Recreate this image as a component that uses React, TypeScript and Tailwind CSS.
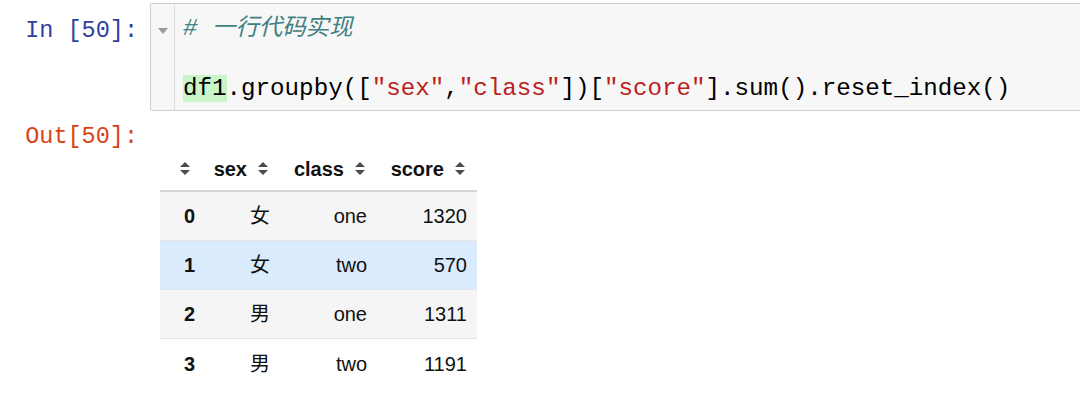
import React from 'react';

const mono = "font-['Liberation_Mono','Noto_Sans_CJK_SC',monospace]";
const sans = "font-['Liberation_Sans','Noto_Sans_CJK_SC',sans-serif]";

function SortIcon() {
  return (
    <svg width="10" height="13" viewBox="0 0 10 13" className="inline-block shrink-0">
      <polygon points="5,0 10,5 0,5" fill="#4d4d4d" />
      <polygon points="0,8 10,8 5,13" fill="#4d4d4d" />
    </svg>
  );
}

const rows = [
  { idx: '0', sex: '女', cls: 'one', score: '1320', bg: 'bg-[#f5f5f5]' },
  { idx: '1', sex: '女', cls: 'two', score: '570', bg: 'bg-[#d9ebfc]' },
  { idx: '2', sex: '男', cls: 'one', score: '1311', bg: 'bg-[#f5f5f5]' },
  { idx: '3', sex: '男', cls: 'two', score: '1191', bg: 'bg-white' },
];

const cols = 'grid grid-cols-[45px_75px_97px_100px]';

export default function App() {
  return (
    <div className="w-[1080px] h-[403px] bg-white overflow-hidden">
      {/* input cell */}
      <div className="flex pt-[3px]">
        <div className={`w-[150px] shrink-0 text-right pr-[12px] pt-[13px] leading-[30px] text-[23.5px] text-[#303f9f] ${mono}`}>
          In [50]:
        </div>
        <div className="flex-1 -mr-[4px] h-[108px] flex bg-[#f7f7f7] border border-[#cfcfcf] rounded-[2px]">
          <div className="w-[24px] shrink-0 border-r border-[#dddddd] flex justify-center pt-[24px]">
            <svg width="10" height="6" viewBox="0 0 10 6">
              <polygon points="0,0 10,0 5,6" fill="#9a9a9a" />
            </svg>
          </div>
          <div className={`pl-[8px] pt-[10px] leading-[30px] text-[24.2px] text-black whitespace-pre ${mono}`}>
            <div className="italic text-[#408080]">
              # <span className="text-[23.4px]">一行代码实现</span>
            </div>
            <div>&nbsp;</div>
            <div>
              <span className="bg-[#c9f5c9]">df1</span>.groupby([<span className="text-[#ba2121]">"sex"</span>,<span className="text-[#ba2121]">"class"</span>])[<span className="text-[#ba2121]">"score"</span>].sum().reset_index()
            </div>
          </div>
        </div>
      </div>

      {/* output */}
      <div className="flex mt-[11px]">
        <div className={`w-[150px] shrink-0 text-right pr-[12px] leading-[30px] text-[23.5px] text-[#d84315] ${mono}`}>
          Out[50]:
        </div>
        <div className={`ml-[10px] pt-[25px] text-[20px] text-[#111] ${sans}`}>
          <div className={`${cols} h-[45px] items-center font-bold border-b-2 border-[#d4d4d4]`}>
            <div className="flex justify-end pr-[15px]">
              <SortIcon />
            </div>
            <div className="flex justify-end items-center gap-[11px] pr-[12px]">
              sex <SortIcon />
            </div>
            <div className="flex justify-end items-center gap-[11px] pr-[12px]">
              class <SortIcon />
            </div>
            <div className="flex justify-end items-center gap-[11px] pr-[12px]">
              score <SortIcon />
            </div>
          </div>
          {rows.map((r, i) => (
            <div
              key={r.idx}
              className={`${cols} h-[49px] items-center ${r.bg} ${i < rows.length - 1 ? 'border-b border-[#e3e3e3]' : ''}`}
            >
              <div className="text-right pr-[10px] font-bold">{r.idx}</div>
              <div className="text-right pr-[10px]">{r.sex}</div>
              <div className="text-right pr-[10px]">{r.cls}</div>
              <div className="text-right pr-[10px]">{r.score}</div>
            </div>
          ))}
        </div>
      </div>
    </div>
  );
}
